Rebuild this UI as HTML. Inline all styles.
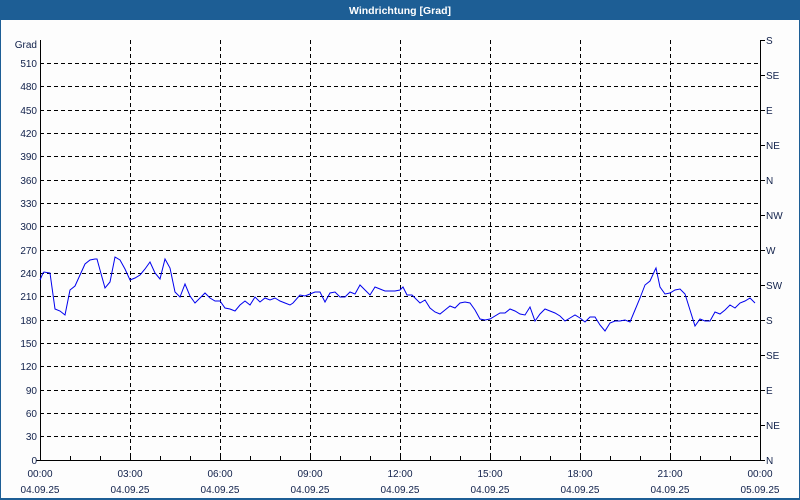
<!DOCTYPE html>
<html><head><meta charset="utf-8"><style>
html,body{margin:0;padding:0;background:#fff;}
svg{display:block;font-family:"Liberation Sans",sans-serif;font-size:10px;}
</style></head><body>
<svg width="800" height="500" viewBox="0 0 800 500" xmlns="http://www.w3.org/2000/svg">
<rect x="0" y="0" width="800" height="500" fill="#fdfdfd"/>
<rect x="0" y="0" width="800" height="20" fill="#1d5e95"/>
<rect x="0" y="0" width="1" height="500" fill="#1d5e95"/>
<rect x="799" y="0" width="1" height="500" fill="#1d5e95"/>
<rect x="0" y="498" width="800" height="2" fill="#1d5e95"/>
<text x="400" y="14" fill="#fff" font-weight="bold" text-anchor="middle" font-size="10.5">Windrichtung [Grad]</text>
<g stroke="#000" stroke-width="1" stroke-dasharray="4,3" fill="none">
<path d="M40 63.5H760M40 86.5H760M40 110.5H760M40 133.5H760M40 156.5H760M40 180.5H760M40 203.5H760M40 226.5H760M40 250.5H760M40 273.5H760M40 296.5H760M40 320.5H760M40 343.5H760M40 366.5H760M40 390.5H760M40 413.5H760M40 436.5H760"/>
<path d="M130.5 40V460M220.5 40V460M310.5 40V460M400.5 40V460M490.5 40V460M580.5 40V460M670.5 40V460"/>
</g>
<g stroke="#000" stroke-width="1" fill="none">
<path d="M40.5 40V460.5H760.5V40"/>
<path d="M760 40.5H765M760 75.5H765M760 110.5H765M760 145.5H765M760 180.5H765M760 215.5H765M760 250.5H765M760 285.5H765M760 320.5H765M760 355.5H765M760 390.5H765M760 425.5H765M760 460.5H765"/>
<path d="M70.5 460V456M100.5 460V456M130.5 460V456M160.5 460V456M190.5 460V456M220.5 460V456M250.5 460V456M280.5 460V456M310.5 460V456M340.5 460V456M370.5 460V456M400.5 460V456M430.5 460V456M460.5 460V456M490.5 460V456M520.5 460V456M550.5 460V456M580.5 460V456M610.5 460V456M640.5 460V456M670.5 460V456M700.5 460V456M730.5 460V456M36 460.5H40"/>
</g>
<polyline fill="none" stroke="#0000ee" stroke-width="1" points="40,280 43,273 44,272 50,273 55,309 60,311 65,315 70,290 75,286 85,264 90,260 95,259 97,259 100,270 105,288 110,282 115,257 120,260 125,269 130,280 135,278 140,275 145,269 150,262 155,273 160,279 165,259 170,268 175,292 180,297 185,284 190,296 195,303 200,298 205,293 210,298 215,301 220,301 225,308 230,309 235,311 240,305 245,301 250,305 255,297 260,302 265,298 270,300 275,298 280,301 285,303 290,305 293,303 300,295 305,296 310,294 315,292 320,292 325,302 330,293 335,292 340,297 345,297 350,292 355,294 360,285 365,290 370,295 375,287 380,289 385,291 395,291 400,290 403,287 407,295 412,295 420,303 425,300 430,308 435,312 440,314 445,310 450,306 455,308 460,303 465,302 470,303 475,310 480,319 485,320 490,319 500,313 505,313 510,309 515,311 520,314 525,315 530,307 535,321 540,314 545,309 550,311 555,313 560,316 565,321 570,318 575,315 580,318 585,322 590,317 595,317 600,325 605,331 610,323 615,321 620,321 625,320 630,322 635,310 640,298 645,285 650,281 655,270 656,268 660,287 665,294 670,293 675,290 680,289 685,294 690,310 695,326 700,319 705,321 710,321 715,312 720,314 725,310 730,305 735,308 740,303 745,301 750,298 755,303"/>
<g fill="#10204a" text-anchor="end">
<text x="37" y="48">Grad</text>
<text x="37" y="67">510</text><text x="37" y="90">480</text><text x="37" y="114">450</text><text x="37" y="137">420</text><text x="37" y="160">390</text><text x="37" y="184">360</text><text x="37" y="207">330</text><text x="37" y="230">300</text><text x="37" y="254">270</text><text x="37" y="277">240</text><text x="37" y="300">210</text><text x="37" y="324">180</text><text x="37" y="347">150</text><text x="37" y="370">120</text><text x="37" y="394">90</text><text x="37" y="417">60</text><text x="37" y="440">30</text><text x="37" y="464">0</text>
</g>
<g fill="#10204a">
<text x="766" y="44">S</text><text x="766" y="79">SE</text><text x="766" y="114">E</text><text x="766" y="149">NE</text><text x="766" y="184">N</text><text x="766" y="219">NW</text><text x="766" y="254">W</text><text x="766" y="289">SW</text><text x="766" y="324">S</text><text x="766" y="359">SE</text><text x="766" y="394">E</text><text x="766" y="429">NE</text><text x="766" y="464">N</text>
</g>
<g fill="#10204a" text-anchor="middle">
<text x="40" y="477">00:00</text><text x="130" y="477">03:00</text><text x="220" y="477">06:00</text><text x="310" y="477">09:00</text><text x="400" y="477">12:00</text><text x="490" y="477">15:00</text><text x="580" y="477">18:00</text><text x="670" y="477">21:00</text><text x="760" y="477">00:00</text>
<text x="40" y="493">04.09.25</text><text x="130" y="493">04.09.25</text><text x="220" y="493">04.09.25</text><text x="310" y="493">04.09.25</text><text x="400" y="493">04.09.25</text><text x="490" y="493">04.09.25</text><text x="580" y="493">04.09.25</text><text x="670" y="493">04.09.25</text><text x="760" y="493">05.09.25</text>
</g>
</svg>
</body></html>
